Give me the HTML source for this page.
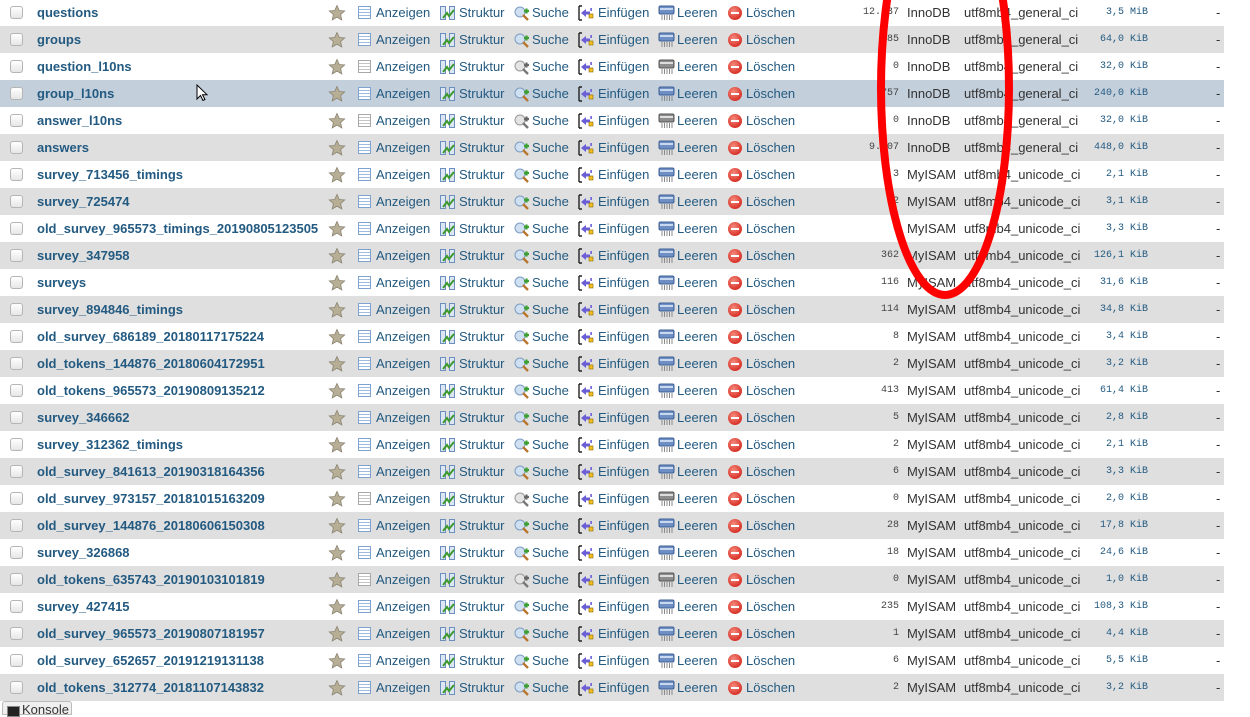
<!DOCTYPE html>
<html><head><meta charset="utf-8">
<style>
*{margin:0;padding:0;box-sizing:border-box}
html,body{width:1250px;height:709px;overflow:hidden;background:#fff;font-family:"Liberation Sans",Arial,sans-serif;font-size:13px;color:#235a81}
.r{position:absolute;left:0;width:1224px;height:27px}
.g{background:#dfdfdf}
.h{background:#c4cfdc}
.r>*{position:absolute;top:0;line-height:27px;white-space:nowrap}
.cb{left:10px;top:7px!important;width:13px;height:13px;border:1px solid #b5b5b5;border-radius:3px;background:linear-gradient(#fff,#e6e6e6)}
.n{left:37px;font-weight:bold;letter-spacing:0}
.st{left:328px;top:5px!important;width:18px;height:18px}
.a1{left:358px;top:7px!important;width:13px;height:13px;border:1px solid #7fa3d0;background:repeating-linear-gradient(#fff 0 2px,#9fbbe0 2px 3px);}
.a1.x{border-color:#a8a8a8;background:repeating-linear-gradient(#fff 0 2px,#c4c4c4 2px 3px)}
.t1{left:376px}
.a2{left:440px;top:7px!important;width:15px;height:14px}
.t2{left:459px}
.a3{left:514px;top:7px!important;width:16px;height:15px}
.t3{left:532px}
.a4{left:578px;top:6px!important;width:16px;height:16px}
.t4{left:598px}
.a5{left:658px;top:6px!important;width:17px;height:16px}
.t5{left:677px}
.a6{left:728px;top:7px!important;width:14px;height:14px;border-radius:50%;background:radial-gradient(circle at 40% 35%,#f58a7c,#d9342a 70%);}
.a6:after{content:"";position:absolute;left:3px;top:6px;width:8px;height:2px;background:#fff}
.t6{left:746px}
.c{right:325px;font-family:"Liberation Mono",monospace;font-size:10px;color:#444}
.e{left:907px;color:#333}
.co{left:964px;color:#333}
.s{right:76px;font-family:"Liberation Mono",monospace;font-size:10px}
.d{left:1216px;color:#333}
#kon{position:absolute;left:2px;top:701px;width:70px;height:14px;background:#efefef;border:1px solid #bbb;border-radius:3px 3px 0 0;font-size:13px;line-height:15px;color:#333;padding-left:19px}
#kon:before{content:"";position:absolute;left:4px;top:4px;width:11px;height:9px;background:#222;border:1px solid #888}
</style></head><body>
<svg width="0" height="0" style="position:absolute">
<defs>
<symbol id="star" viewBox="0 0 18 18"><path d="M9 1.5l2.3 5 5.4.5-4.1 3.6 1.2 5.3L9 13.1 4.2 15.9l1.2-5.3L1.3 7l5.4-.5z" fill="#b7ae96" stroke="#8b8370" stroke-width="0.8"/></symbol>
<symbol id="str" viewBox="0 0 15 14"><rect x="0.5" y="0.5" width="5" height="13" fill="#dde7f4" stroke="#6d8fbf"/><rect x="9.5" y="0.5" width="5" height="13" fill="#dde7f4" stroke="#6d8fbf"/><path d="M3 12L7 7l2 3 5-6" stroke="#3c9a2c" stroke-width="2" fill="none"/></symbol>
<symbol id="sea" viewBox="0 0 16 15"><circle cx="6" cy="6" r="5" fill="#cfe0f2" stroke="#7e9cc0"/><path d="M9 9l5 5" stroke="#b9772e" stroke-width="2.4"/><path d="M10 5h5M12.5 2.5v5" stroke="#3d9f32" stroke-width="2.2"/></symbol>
<symbol id="seax" viewBox="0 0 16 15"><circle cx="6" cy="6" r="5" fill="#e4e4e4" stroke="#999"/><path d="M9 9l5 5" stroke="#777" stroke-width="2.4"/><path d="M10 5h5M12.5 2.5v5" stroke="#666" stroke-width="2.2"/></symbol>
<symbol id="ins" viewBox="0 0 16 16"><path d="M1 1h3M1 15h3M1 1v14" stroke="#222" stroke-width="1.4" fill="none"/><path d="M3 8l5-4v2.5h4v3H8V12z" fill="#6a5ed6"/><rect x="11" y="9" width="4" height="4" fill="#f0c020" stroke="#8a6a00" stroke-width=".6"/><rect x="12.3" y="3" width="1.6" height="3" fill="#6a5ed6"/></symbol>
<symbol id="emp" viewBox="0 0 17 16"><rect x="1" y="1" width="15" height="8" rx="1.5" fill="#6f8fc4" stroke="#3e5f95"/><rect x="2" y="3" width="13" height="2" fill="#c8d8ee"/><path d="M4 10v5M6.5 10v5M9 10v5M11.5 10v5M14 10v5" stroke="#888" stroke-width="1"/></symbol>
<symbol id="empx" viewBox="0 0 17 16"><rect x="1" y="1" width="15" height="8" rx="1.5" fill="#8c8c8c" stroke="#555"/><rect x="2" y="3" width="13" height="2" fill="#ddd"/><path d="M4 10v5M6.5 10v5M9 10v5M11.5 10v5M14 10v5" stroke="#888" stroke-width="1"/></symbol>
</defs></svg>
<div id="t">
<div class="r" style="top:-1px"><i class="cb"></i><span class="n">questions</span><svg class="st"><use href="#star"/></svg><i class="a1"></i><span class="t1">Anzeigen</span><svg class="a2"><use href="#str"/></svg><span class="t2">Struktur</span><svg class="a3"><use href="#sea"/></svg><span class="t3">Suche</span><svg class="a4"><use href="#ins"/></svg><span class="t4">Einfügen</span><svg class="a5"><use href="#emp"/></svg><span class="t5">Leeren</span><i class="a6"></i><span class="t6">Löschen</span><span class="c">12.437</span><span class="e">InnoDB</span><span class="co">utf8mb4_general_ci</span><span class="s">3,5 MiB</span><span class="d">-</span></div>
<div class="r g" style="top:26px"><i class="cb"></i><span class="n">groups</span><svg class="st"><use href="#star"/></svg><i class="a1"></i><span class="t1">Anzeigen</span><svg class="a2"><use href="#str"/></svg><span class="t2">Struktur</span><svg class="a3"><use href="#sea"/></svg><span class="t3">Suche</span><svg class="a4"><use href="#ins"/></svg><span class="t4">Einfügen</span><svg class="a5"><use href="#emp"/></svg><span class="t5">Leeren</span><i class="a6"></i><span class="t6">Löschen</span><span class="c">585</span><span class="e">InnoDB</span><span class="co">utf8mb4_general_ci</span><span class="s">64,0 KiB</span><span class="d">-</span></div>
<div class="r" style="top:53px"><i class="cb"></i><span class="n">question_l10ns</span><svg class="st"><use href="#star"/></svg><i class="a1 x"></i><span class="t1">Anzeigen</span><svg class="a2"><use href="#str"/></svg><span class="t2">Struktur</span><svg class="a3"><use href="#seax"/></svg><span class="t3">Suche</span><svg class="a4"><use href="#ins"/></svg><span class="t4">Einfügen</span><svg class="a5"><use href="#empx"/></svg><span class="t5">Leeren</span><i class="a6"></i><span class="t6">Löschen</span><span class="c">0</span><span class="e">InnoDB</span><span class="co">utf8mb4_general_ci</span><span class="s">32,0 KiB</span><span class="d">-</span></div>
<div class="r h" style="top:80px"><i class="cb"></i><span class="n">group_l10ns</span><svg class="st"><use href="#star"/></svg><i class="a1"></i><span class="t1">Anzeigen</span><svg class="a2"><use href="#str"/></svg><span class="t2">Struktur</span><svg class="a3"><use href="#sea"/></svg><span class="t3">Suche</span><svg class="a4"><use href="#ins"/></svg><span class="t4">Einfügen</span><svg class="a5"><use href="#emp"/></svg><span class="t5">Leeren</span><i class="a6"></i><span class="t6">Löschen</span><span class="c">757</span><span class="e">InnoDB</span><span class="co">utf8mb4_general_ci</span><span class="s">240,0 KiB</span><span class="d">-</span></div>
<div class="r" style="top:107px"><i class="cb"></i><span class="n">answer_l10ns</span><svg class="st"><use href="#star"/></svg><i class="a1 x"></i><span class="t1">Anzeigen</span><svg class="a2"><use href="#str"/></svg><span class="t2">Struktur</span><svg class="a3"><use href="#seax"/></svg><span class="t3">Suche</span><svg class="a4"><use href="#ins"/></svg><span class="t4">Einfügen</span><svg class="a5"><use href="#empx"/></svg><span class="t5">Leeren</span><i class="a6"></i><span class="t6">Löschen</span><span class="c">0</span><span class="e">InnoDB</span><span class="co">utf8mb4_general_ci</span><span class="s">32,0 KiB</span><span class="d">-</span></div>
<div class="r g" style="top:134px"><i class="cb"></i><span class="n">answers</span><svg class="st"><use href="#star"/></svg><i class="a1"></i><span class="t1">Anzeigen</span><svg class="a2"><use href="#str"/></svg><span class="t2">Struktur</span><svg class="a3"><use href="#sea"/></svg><span class="t3">Suche</span><svg class="a4"><use href="#ins"/></svg><span class="t4">Einfügen</span><svg class="a5"><use href="#emp"/></svg><span class="t5">Leeren</span><i class="a6"></i><span class="t6">Löschen</span><span class="c">9.307</span><span class="e">InnoDB</span><span class="co">utf8mb4_general_ci</span><span class="s">448,0 KiB</span><span class="d">-</span></div>
<div class="r" style="top:161px"><i class="cb"></i><span class="n">survey_713456_timings</span><svg class="st"><use href="#star"/></svg><i class="a1"></i><span class="t1">Anzeigen</span><svg class="a2"><use href="#str"/></svg><span class="t2">Struktur</span><svg class="a3"><use href="#sea"/></svg><span class="t3">Suche</span><svg class="a4"><use href="#ins"/></svg><span class="t4">Einfügen</span><svg class="a5"><use href="#emp"/></svg><span class="t5">Leeren</span><i class="a6"></i><span class="t6">Löschen</span><span class="c">3</span><span class="e">MyISAM</span><span class="co">utf8mb4_unicode_ci</span><span class="s">2,1 KiB</span><span class="d">-</span></div>
<div class="r g" style="top:188px"><i class="cb"></i><span class="n">survey_725474</span><svg class="st"><use href="#star"/></svg><i class="a1"></i><span class="t1">Anzeigen</span><svg class="a2"><use href="#str"/></svg><span class="t2">Struktur</span><svg class="a3"><use href="#sea"/></svg><span class="t3">Suche</span><svg class="a4"><use href="#ins"/></svg><span class="t4">Einfügen</span><svg class="a5"><use href="#emp"/></svg><span class="t5">Leeren</span><i class="a6"></i><span class="t6">Löschen</span><span class="c">12</span><span class="e">MyISAM</span><span class="co">utf8mb4_unicode_ci</span><span class="s">3,1 KiB</span><span class="d">-</span></div>
<div class="r" style="top:215px"><i class="cb"></i><span class="n">old_survey_965573_timings_20190805123505</span><svg class="st"><use href="#star"/></svg><i class="a1"></i><span class="t1">Anzeigen</span><svg class="a2"><use href="#str"/></svg><span class="t2">Struktur</span><svg class="a3"><use href="#sea"/></svg><span class="t3">Suche</span><svg class="a4"><use href="#ins"/></svg><span class="t4">Einfügen</span><svg class="a5"><use href="#emp"/></svg><span class="t5">Leeren</span><i class="a6"></i><span class="t6">Löschen</span><span class="c">5</span><span class="e">MyISAM</span><span class="co">utf8mb4_unicode_ci</span><span class="s">3,3 KiB</span><span class="d">-</span></div>
<div class="r g" style="top:242px"><i class="cb"></i><span class="n">survey_347958</span><svg class="st"><use href="#star"/></svg><i class="a1"></i><span class="t1">Anzeigen</span><svg class="a2"><use href="#str"/></svg><span class="t2">Struktur</span><svg class="a3"><use href="#sea"/></svg><span class="t3">Suche</span><svg class="a4"><use href="#ins"/></svg><span class="t4">Einfügen</span><svg class="a5"><use href="#emp"/></svg><span class="t5">Leeren</span><i class="a6"></i><span class="t6">Löschen</span><span class="c">362</span><span class="e">MyISAM</span><span class="co">utf8mb4_unicode_ci</span><span class="s">126,1 KiB</span><span class="d">-</span></div>
<div class="r" style="top:269px"><i class="cb"></i><span class="n">surveys</span><svg class="st"><use href="#star"/></svg><i class="a1"></i><span class="t1">Anzeigen</span><svg class="a2"><use href="#str"/></svg><span class="t2">Struktur</span><svg class="a3"><use href="#sea"/></svg><span class="t3">Suche</span><svg class="a4"><use href="#ins"/></svg><span class="t4">Einfügen</span><svg class="a5"><use href="#emp"/></svg><span class="t5">Leeren</span><i class="a6"></i><span class="t6">Löschen</span><span class="c">116</span><span class="e">MyISAM</span><span class="co">utf8mb4_unicode_ci</span><span class="s">31,6 KiB</span><span class="d">-</span></div>
<div class="r g" style="top:296px"><i class="cb"></i><span class="n">survey_894846_timings</span><svg class="st"><use href="#star"/></svg><i class="a1"></i><span class="t1">Anzeigen</span><svg class="a2"><use href="#str"/></svg><span class="t2">Struktur</span><svg class="a3"><use href="#sea"/></svg><span class="t3">Suche</span><svg class="a4"><use href="#ins"/></svg><span class="t4">Einfügen</span><svg class="a5"><use href="#emp"/></svg><span class="t5">Leeren</span><i class="a6"></i><span class="t6">Löschen</span><span class="c">114</span><span class="e">MyISAM</span><span class="co">utf8mb4_unicode_ci</span><span class="s">34,8 KiB</span><span class="d">-</span></div>
<div class="r" style="top:323px"><i class="cb"></i><span class="n">old_survey_686189_20180117175224</span><svg class="st"><use href="#star"/></svg><i class="a1"></i><span class="t1">Anzeigen</span><svg class="a2"><use href="#str"/></svg><span class="t2">Struktur</span><svg class="a3"><use href="#sea"/></svg><span class="t3">Suche</span><svg class="a4"><use href="#ins"/></svg><span class="t4">Einfügen</span><svg class="a5"><use href="#emp"/></svg><span class="t5">Leeren</span><i class="a6"></i><span class="t6">Löschen</span><span class="c">8</span><span class="e">MyISAM</span><span class="co">utf8mb4_unicode_ci</span><span class="s">3,4 KiB</span><span class="d">-</span></div>
<div class="r g" style="top:350px"><i class="cb"></i><span class="n">old_tokens_144876_20180604172951</span><svg class="st"><use href="#star"/></svg><i class="a1"></i><span class="t1">Anzeigen</span><svg class="a2"><use href="#str"/></svg><span class="t2">Struktur</span><svg class="a3"><use href="#sea"/></svg><span class="t3">Suche</span><svg class="a4"><use href="#ins"/></svg><span class="t4">Einfügen</span><svg class="a5"><use href="#emp"/></svg><span class="t5">Leeren</span><i class="a6"></i><span class="t6">Löschen</span><span class="c">2</span><span class="e">MyISAM</span><span class="co">utf8mb4_unicode_ci</span><span class="s">3,2 KiB</span><span class="d">-</span></div>
<div class="r" style="top:377px"><i class="cb"></i><span class="n">old_tokens_965573_20190809135212</span><svg class="st"><use href="#star"/></svg><i class="a1"></i><span class="t1">Anzeigen</span><svg class="a2"><use href="#str"/></svg><span class="t2">Struktur</span><svg class="a3"><use href="#sea"/></svg><span class="t3">Suche</span><svg class="a4"><use href="#ins"/></svg><span class="t4">Einfügen</span><svg class="a5"><use href="#emp"/></svg><span class="t5">Leeren</span><i class="a6"></i><span class="t6">Löschen</span><span class="c">413</span><span class="e">MyISAM</span><span class="co">utf8mb4_unicode_ci</span><span class="s">61,4 KiB</span><span class="d">-</span></div>
<div class="r g" style="top:404px"><i class="cb"></i><span class="n">survey_346662</span><svg class="st"><use href="#star"/></svg><i class="a1"></i><span class="t1">Anzeigen</span><svg class="a2"><use href="#str"/></svg><span class="t2">Struktur</span><svg class="a3"><use href="#sea"/></svg><span class="t3">Suche</span><svg class="a4"><use href="#ins"/></svg><span class="t4">Einfügen</span><svg class="a5"><use href="#emp"/></svg><span class="t5">Leeren</span><i class="a6"></i><span class="t6">Löschen</span><span class="c">5</span><span class="e">MyISAM</span><span class="co">utf8mb4_unicode_ci</span><span class="s">2,8 KiB</span><span class="d">-</span></div>
<div class="r" style="top:431px"><i class="cb"></i><span class="n">survey_312362_timings</span><svg class="st"><use href="#star"/></svg><i class="a1"></i><span class="t1">Anzeigen</span><svg class="a2"><use href="#str"/></svg><span class="t2">Struktur</span><svg class="a3"><use href="#sea"/></svg><span class="t3">Suche</span><svg class="a4"><use href="#ins"/></svg><span class="t4">Einfügen</span><svg class="a5"><use href="#emp"/></svg><span class="t5">Leeren</span><i class="a6"></i><span class="t6">Löschen</span><span class="c">2</span><span class="e">MyISAM</span><span class="co">utf8mb4_unicode_ci</span><span class="s">2,1 KiB</span><span class="d">-</span></div>
<div class="r g" style="top:458px"><i class="cb"></i><span class="n">old_survey_841613_20190318164356</span><svg class="st"><use href="#star"/></svg><i class="a1"></i><span class="t1">Anzeigen</span><svg class="a2"><use href="#str"/></svg><span class="t2">Struktur</span><svg class="a3"><use href="#sea"/></svg><span class="t3">Suche</span><svg class="a4"><use href="#ins"/></svg><span class="t4">Einfügen</span><svg class="a5"><use href="#emp"/></svg><span class="t5">Leeren</span><i class="a6"></i><span class="t6">Löschen</span><span class="c">6</span><span class="e">MyISAM</span><span class="co">utf8mb4_unicode_ci</span><span class="s">3,3 KiB</span><span class="d">-</span></div>
<div class="r" style="top:485px"><i class="cb"></i><span class="n">old_survey_973157_20181015163209</span><svg class="st"><use href="#star"/></svg><i class="a1 x"></i><span class="t1">Anzeigen</span><svg class="a2"><use href="#str"/></svg><span class="t2">Struktur</span><svg class="a3"><use href="#seax"/></svg><span class="t3">Suche</span><svg class="a4"><use href="#ins"/></svg><span class="t4">Einfügen</span><svg class="a5"><use href="#empx"/></svg><span class="t5">Leeren</span><i class="a6"></i><span class="t6">Löschen</span><span class="c">0</span><span class="e">MyISAM</span><span class="co">utf8mb4_unicode_ci</span><span class="s">2,0 KiB</span><span class="d">-</span></div>
<div class="r g" style="top:512px"><i class="cb"></i><span class="n">old_survey_144876_20180606150308</span><svg class="st"><use href="#star"/></svg><i class="a1"></i><span class="t1">Anzeigen</span><svg class="a2"><use href="#str"/></svg><span class="t2">Struktur</span><svg class="a3"><use href="#sea"/></svg><span class="t3">Suche</span><svg class="a4"><use href="#ins"/></svg><span class="t4">Einfügen</span><svg class="a5"><use href="#emp"/></svg><span class="t5">Leeren</span><i class="a6"></i><span class="t6">Löschen</span><span class="c">28</span><span class="e">MyISAM</span><span class="co">utf8mb4_unicode_ci</span><span class="s">17,8 KiB</span><span class="d">-</span></div>
<div class="r" style="top:539px"><i class="cb"></i><span class="n">survey_326868</span><svg class="st"><use href="#star"/></svg><i class="a1"></i><span class="t1">Anzeigen</span><svg class="a2"><use href="#str"/></svg><span class="t2">Struktur</span><svg class="a3"><use href="#sea"/></svg><span class="t3">Suche</span><svg class="a4"><use href="#ins"/></svg><span class="t4">Einfügen</span><svg class="a5"><use href="#emp"/></svg><span class="t5">Leeren</span><i class="a6"></i><span class="t6">Löschen</span><span class="c">18</span><span class="e">MyISAM</span><span class="co">utf8mb4_unicode_ci</span><span class="s">24,6 KiB</span><span class="d">-</span></div>
<div class="r g" style="top:566px"><i class="cb"></i><span class="n">old_tokens_635743_20190103101819</span><svg class="st"><use href="#star"/></svg><i class="a1 x"></i><span class="t1">Anzeigen</span><svg class="a2"><use href="#str"/></svg><span class="t2">Struktur</span><svg class="a3"><use href="#seax"/></svg><span class="t3">Suche</span><svg class="a4"><use href="#ins"/></svg><span class="t4">Einfügen</span><svg class="a5"><use href="#empx"/></svg><span class="t5">Leeren</span><i class="a6"></i><span class="t6">Löschen</span><span class="c">0</span><span class="e">MyISAM</span><span class="co">utf8mb4_unicode_ci</span><span class="s">1,0 KiB</span><span class="d">-</span></div>
<div class="r" style="top:593px"><i class="cb"></i><span class="n">survey_427415</span><svg class="st"><use href="#star"/></svg><i class="a1"></i><span class="t1">Anzeigen</span><svg class="a2"><use href="#str"/></svg><span class="t2">Struktur</span><svg class="a3"><use href="#sea"/></svg><span class="t3">Suche</span><svg class="a4"><use href="#ins"/></svg><span class="t4">Einfügen</span><svg class="a5"><use href="#emp"/></svg><span class="t5">Leeren</span><i class="a6"></i><span class="t6">Löschen</span><span class="c">235</span><span class="e">MyISAM</span><span class="co">utf8mb4_unicode_ci</span><span class="s">108,3 KiB</span><span class="d">-</span></div>
<div class="r g" style="top:620px"><i class="cb"></i><span class="n">old_survey_965573_20190807181957</span><svg class="st"><use href="#star"/></svg><i class="a1"></i><span class="t1">Anzeigen</span><svg class="a2"><use href="#str"/></svg><span class="t2">Struktur</span><svg class="a3"><use href="#sea"/></svg><span class="t3">Suche</span><svg class="a4"><use href="#ins"/></svg><span class="t4">Einfügen</span><svg class="a5"><use href="#emp"/></svg><span class="t5">Leeren</span><i class="a6"></i><span class="t6">Löschen</span><span class="c">1</span><span class="e">MyISAM</span><span class="co">utf8mb4_unicode_ci</span><span class="s">4,4 KiB</span><span class="d">-</span></div>
<div class="r" style="top:647px"><i class="cb"></i><span class="n">old_survey_652657_20191219131138</span><svg class="st"><use href="#star"/></svg><i class="a1"></i><span class="t1">Anzeigen</span><svg class="a2"><use href="#str"/></svg><span class="t2">Struktur</span><svg class="a3"><use href="#sea"/></svg><span class="t3">Suche</span><svg class="a4"><use href="#ins"/></svg><span class="t4">Einfügen</span><svg class="a5"><use href="#emp"/></svg><span class="t5">Leeren</span><i class="a6"></i><span class="t6">Löschen</span><span class="c">6</span><span class="e">MyISAM</span><span class="co">utf8mb4_unicode_ci</span><span class="s">5,5 KiB</span><span class="d">-</span></div>
<div class="r g" style="top:674px"><i class="cb"></i><span class="n">old_tokens_312774_20181107143832</span><svg class="st"><use href="#star"/></svg><i class="a1"></i><span class="t1">Anzeigen</span><svg class="a2"><use href="#str"/></svg><span class="t2">Struktur</span><svg class="a3"><use href="#sea"/></svg><span class="t3">Suche</span><svg class="a4"><use href="#ins"/></svg><span class="t4">Einfügen</span><svg class="a5"><use href="#emp"/></svg><span class="t5">Leeren</span><i class="a6"></i><span class="t6">Löschen</span><span class="c">2</span><span class="e">MyISAM</span><span class="co">utf8mb4_unicode_ci</span><span class="s">3,2 KiB</span><span class="d">-</span></div>
</div>
<div id="kon">Konsole</div>
<svg style="position:absolute;left:0;top:0" width="1250" height="709"><ellipse cx="945" cy="88" rx="64" ry="207" fill="none" stroke="#f00" stroke-width="8"/></svg>
<svg style="position:absolute;left:196px;top:84px" width="12" height="18"><path d="M1 1v14l3.5-3.5 2.5 5 2-1-2.5-4.8H11z" fill="#fff" stroke="#000" stroke-width="1"/></svg>
</body></html>
